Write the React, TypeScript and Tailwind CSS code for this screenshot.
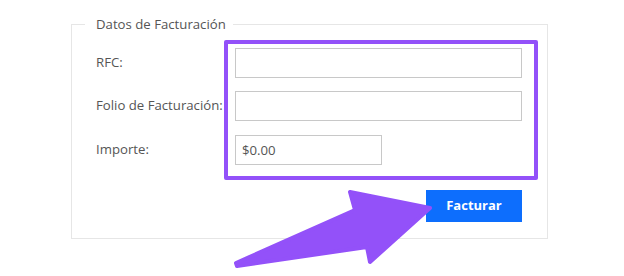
import React from 'react'

const font = { fontFamily: '"Open Sans", "Noto Sans", sans-serif' }

function Row({ label, value, short }: { label: string; value?: string; short?: boolean }) {
  return (
    <div className="flex items-center">
      <label className="w-[139px] text-[13.2px] text-[#555]">{label}</label>
      <input
        readOnly
        value={value ?? ''}
        className={`h-[30px] ${short ? 'w-[147px]' : 'w-[287px]'} border border-[#c8c8c8] bg-white px-[6px] text-[13.2px] text-[#555] outline-none`}
      />
    </div>
  )
}

export default function App() {
  return (
    <div className="relative h-[276px] w-[624px] bg-white pt-[14px]" style={font}>
      <fieldset className="relative ml-[71px] w-[477px] border border-[#e6e6e6] pb-[16px] pl-[24px] pt-[14px]">
        <legend className="-ml-[11px] pl-[11px] pr-[7px] text-[13.2px] leading-[20px] text-[#555]">
          Datos de Facturación
        </legend>
        <div className="flex flex-col">
          <Row label="RFC:" />
          <div className="h-[13px]" />
          <Row label="Folio de Facturación:" />
          <div className="h-[14px]" />
          <Row label="Importe:" value="$0.00" short />
        </div>
        <div className="mt-[25px] flex w-[426px] justify-end">
          <button className="h-[32px] w-[96px] bg-[#0d6efd] text-[13px] font-bold text-white">
            Facturar
          </button>
        </div>
        {/* annotation box */}
        <div className="pointer-events-none absolute left-[152px] top-[6px] h-[140px] w-[314px] rounded-[2px] border-4 border-[#9351f9]" />
      </fieldset>
      <svg className="pointer-events-none absolute left-0 top-0" width="624" height="276" viewBox="0 0 624 276">
        <polygon
          points="236,263 355,210 350,192 430,208 370,262 367,247 237,266"
          fill="#9351f9"
          stroke="#9351f9"
          strokeWidth="4"
          strokeLinejoin="round"
        />
      </svg>
    </div>
  )
}
